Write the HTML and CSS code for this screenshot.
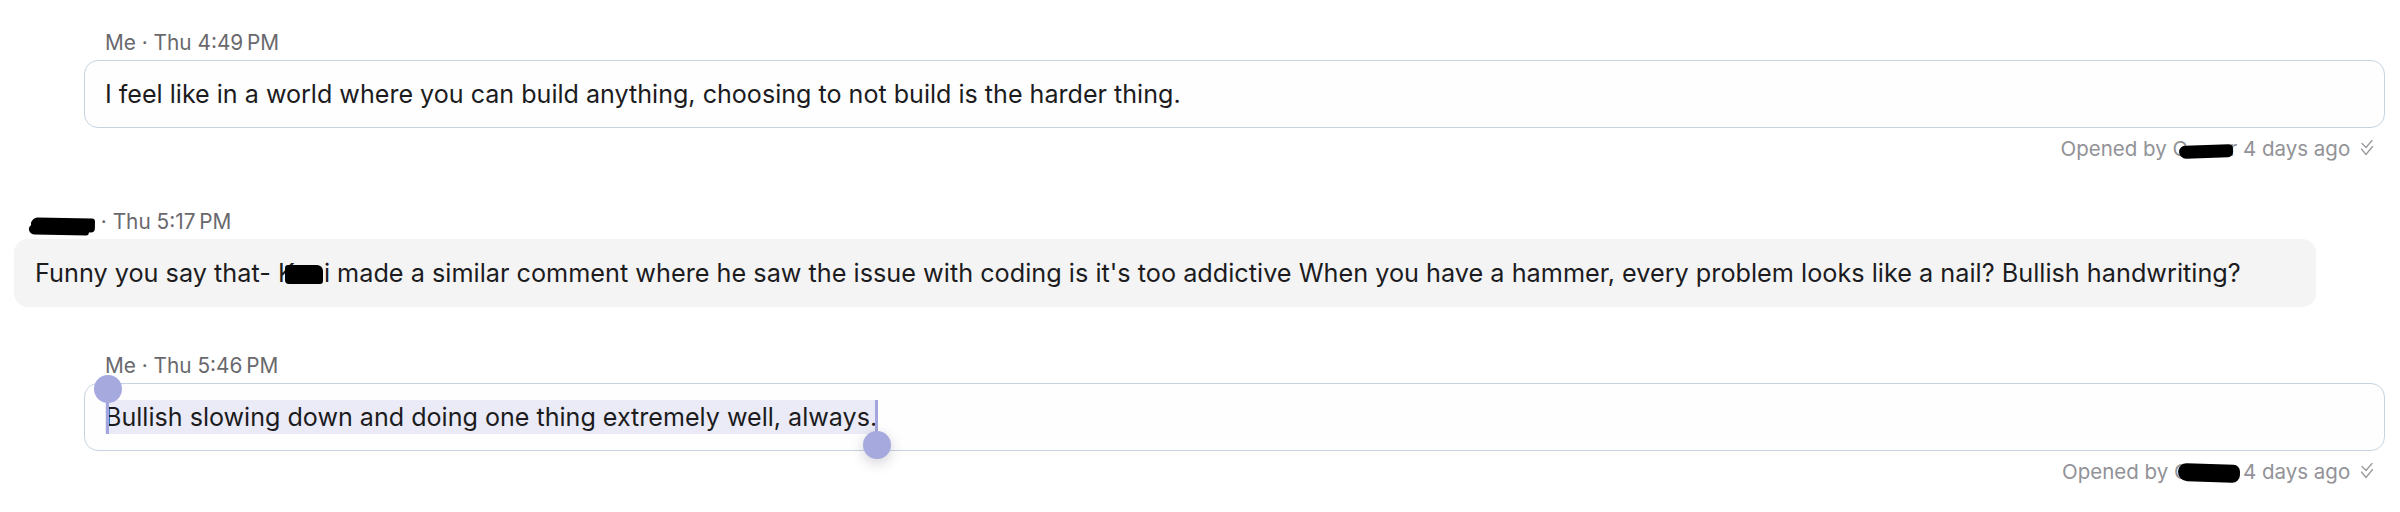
FILE: index.html
```html
<!DOCTYPE html>
<html>
<head>
<meta charset="utf-8">
<link rel="stylesheet" href="styles.css">
</head>
<body>
<div class="thread">
  <div class="msg mine">
    <div class="meta">Me · Thu 4:49&#8239;PM</div>
    <div class="bubble">I feel like in a world where you can build anything, choosing to not build is the harder thing.</div>
    <div class="foot">Opened by C<span class="redact r-foot1"></span>r 4 days ago <svg class="seen" viewBox="0 0 14 18" width="14" height="18"><path d="M2 3.5 L6 7.5 L12 0.5" /><path d="M1.5 9 L6 14.5 L12.5 6.5" /></svg></div>
  </div>

  <div class="msg theirs">
    <div class="meta"><span class="redact r-name"></span> · Thu 5:17&#8239;PM</div>
    <div class="bubble">Funny you say that- K<span class="redact r-inline"></span>i made a similar comment where he saw the issue with coding is it's too addictive When you have a hammer, every problem looks like a nail? Bullish handwriting?</div>
  </div>

  <div class="msg mine">
    <div class="meta">Me · Thu 5:46&#8239;PM</div>
    <div class="bubble"><span class="sel">Bullish slowing down and doing one thing extremely well, always.<span class="handle start"></span><span class="handle end"></span></span></div>
    <div class="foot">Opened by C<span class="redact r-foot2"></span>4 days ago <svg class="seen" viewBox="0 0 14 18" width="14" height="18"><path d="M2 3.5 L6 7.5 L12 0.5" /><path d="M1.5 9 L6 14.5 L12.5 6.5" /></svg></div>
  </div>
</div>
</body>
</html>
```

FILE: styles.css
```css
html, body {
  margin: 0;
  padding: 0;
  background: #ffffff;
}

body {
  font-family: "Inter", "Noto Sans", "Liberation Sans", sans-serif;
  color: #1c1c1e;
}

.thread {
  display: flex;
  flex-direction: column;
  padding-top: 26px;
}

.msg {
  display: flex;
  flex-direction: column;
  margin-bottom: 42px;
}

.mine {
  margin-left: 84px;
  margin-right: 15px;
}

.theirs {
  margin-left: 14px;
  width: 2302px;
}

.meta {
  height: 28px;
  line-height: 28px;
  padding-left: 21px;
  padding-top: 3px;
  font-size: 20.8px;
  color: #69696d;
  margin-bottom: 3px;
  display: flex;
  align-items: center;
  white-space: pre;
}

.bubble {
  box-sizing: border-box;
  height: 68px;
  display: flex;
  align-items: center;
  padding: 0 21px;
  border-radius: 14px;
  font-size: 25.1px;
  white-space: pre;
}

.theirs .bubble {
  font-size: 25.25px;
  background: #f4f4f5;
}

.mine .bubble {
  border: 1.5px solid #c6d4e1;
  background: #fefeff;
  padding-left: 20px;
}

.foot {
  margin-top: 7px;
  height: 28px;
  line-height: 28px;
  display: flex;
  justify-content: flex-end;
  align-items: center;
  padding-right: 11px;
  font-size: 20.5px;
  color: #929297;
  white-space: pre;
}

.seen {
  margin-left: 4px;
  fill: none;
  stroke: #9a9a9f;
  stroke-width: 1.3;
  stroke-linecap: round;
  stroke-linejoin: round;
}

.redact {
  display: inline-block;
  background: #000;
}

.r-foot1 {
  width: 54px;
  height: 13px;
  border-radius: 7px 5px 6px 8px;
  margin-left: -8px;
  margin-right: -4px;
  transform: rotate(-2deg) translateY(2px);
}

.r-foot2 {
  width: 62px;
  height: 18px;
  border-radius: 9px 7px 8px 10px;
  margin-left: -11px;
  margin-right: 3px;
  transform: rotate(2deg) translateY(1px);
}

.r-name {
  width: 64px;
  height: 14px;
  border-radius: 8px 4px 5px 9px;
  margin-left: -4px;
  transform: rotate(1deg) translateY(3px);
  box-shadow: -4px 5px 0 -2px #000;
}

.r-inline {
  width: 38px;
  height: 19px;
  border-radius: 3px 6px 3px 4px;
  margin-left: -10px;
  margin-right: 1px;
  transform: translateY(1px);
}

.sel {
  position: relative;
  display: inline-block;
  line-height: 34px;
  background: #ebebf7;
}

.handle {
  position: absolute;
  width: 3px;
  background: #a3a6dc;
}

.handle::before {
  content: "";
  position: absolute;
  left: -12.5px;
  width: 28px;
  height: 28px;
  border-radius: 50%;
  background: #a6a9de;
}

.handle.start {
  left: 1px;
  top: -11px;
  height: 45px;
}

.handle.start::before {
  top: -14px;
}

.handle.end {
  right: -1px;
  top: 0;
  height: 45px;
}

.handle.end::before {
  bottom: -14px;
  box-shadow: 0 4px 14px rgba(0, 0, 40, 0.18);
}
```
